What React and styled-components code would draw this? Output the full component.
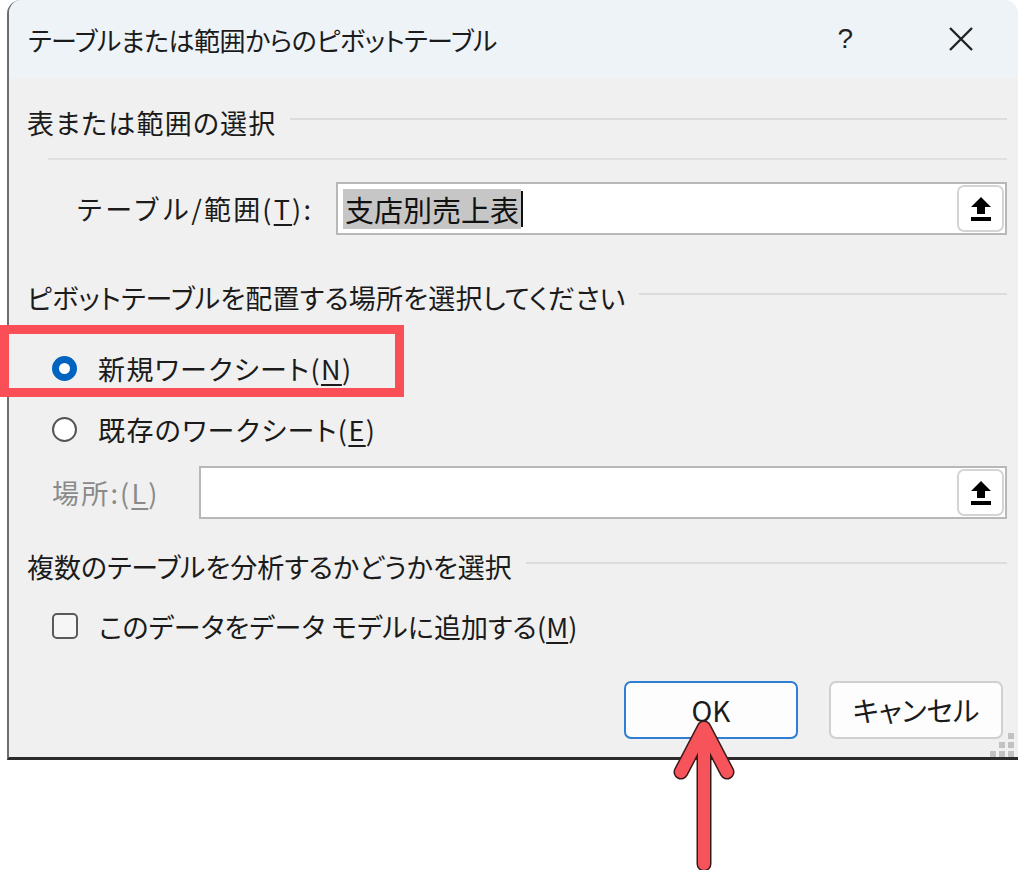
import React from 'react'
import styled, { createGlobalStyle } from 'styled-components'

const GlobalStyle = createGlobalStyle`
  html, body {
    margin: 0;
    padding: 0;
    background: #ffffff;
  }
  body {
    font-family: "Noto Sans CJK JP", "Noto Sans", sans-serif;
    color: #1b1b1b;
    font-feature-settings: "palt";
  }
`

const Page = styled.div`
  position: relative;
  width: 1024px;
  height: 870px;
  overflow: hidden;
`

const Dialog = styled.div`
  margin-left: 7px;
  width: 1011px;
  height: 760px;
  box-sizing: border-box;
  background: #f0f0f0;
  border-left: 2px solid #6d6d6d;
  border-bottom: 3px solid #2b2b2b;
  border-top-left-radius: 14px;
  border-top-right-radius: 14px;
  display: flex;
  flex-direction: column;
  overflow: hidden;
`

const TitleBar = styled.div`
  height: 78px;
  flex-shrink: 0;
  background: #eef3f8;
  display: flex;
  align-items: center;
  padding-left: 19px;
  padding-right: 44px;
`

const Title = styled.div`
  flex: 1;
  font-size: 26px;
  letter-spacing: -0.5px;
`

const TitleButton = styled.div`
  font-size: 28px;
  font-family: "Liberation Sans", sans-serif;
  color: #222;
  margin-left: ${p => p.gap}px;
  display: flex;
  align-items: center;
`

const Body = styled.div`
  padding: 0 11px 0 18px;
  display: flex;
  flex-direction: column;
`

const SectionHeader = styled.div`
  margin-top: ${p => p.top}px;
  height: 36px;
  display: flex;
  align-items: center;
  font-size: 27px;
  letter-spacing: ${p => p.spacing ?? 0.2}px;
  gap: 14px;
  &::after {
    content: '';
    flex: 1;
    height: 2px;
    background: #dcdcdc;
    margin-top: -6px;
  }
`

const Divider = styled.div`
  margin-top: 18px;
  margin-left: 21px;
  height: 2px;
  background: #e0e0e0;
`

const FieldRow = styled.div`
  margin-top: ${p => p.top}px;
  display: flex;
  align-items: center;
  height: 53px;
`

const FieldLabel = styled.div`
  width: ${p => p.width}px;
  padding-left: ${p => p.indent}px;
  box-sizing: border-box;
  flex-shrink: 0;
  font-size: 27px;
  letter-spacing: 2.2px;
  font-feature-settings: normal;
  color: ${p => (p.disabled ? '#8a8a8a' : '#1b1b1b')};
`

const Input = styled.div`
  flex: 1;
  height: 100%;
  box-sizing: border-box;
  background: #ffffff;
  border: 2px solid #b8b8b8;
  display: flex;
  align-items: center;
  padding-left: 5px;
`

const Selected = styled.span`
  background: #c6c6c6;
  font-size: 29px;
  line-height: 40px;
  padding: 0 2px;
  color: #111;
`

const Caret = styled.span`
  width: 2px;
  height: 36px;
  background: #111;
`

const Spacer = styled.div`
  flex: 1;
`

const PickButton = styled.div`
  width: 47px;
  height: 47px;
  margin-right: 1px;
  box-sizing: border-box;
  border: 2px solid #d4d4d4;
  border-radius: 7px;
  background: #ffffff;
  display: flex;
  align-items: center;
  justify-content: center;
`

const OptionRow = styled.div`
  margin-top: ${p => p.top}px;
  height: 40px;
  display: flex;
  align-items: center;
  padding-left: 25px;
  gap: 21px;
  font-size: 27px;
  letter-spacing: ${p => p.spacing}px;
`

const Radio = styled.div`
  width: 25px;
  height: 25px;
  border-radius: 50%;
  box-sizing: border-box;
  border: ${p => (p.checked ? '7px solid #0063c0' : '2px solid #555')};
  background: #ffffff;
`

const Checkbox = styled.div`
  width: 26px;
  height: 26px;
  box-sizing: border-box;
  border: 2px solid #5a5a5a;
  border-radius: 5px;
  background: #f6f6f6;
`

const Key = styled.span`
  text-decoration: underline;
  text-underline-offset: 4px;
  text-decoration-thickness: 2px;
`

const ButtonBar = styled.div`
  margin-top: 35px;
  display: flex;
  justify-content: flex-end;
  gap: 31px;
  padding-right: 4px;
`

const DialogButton = styled.div`
  width: 174px;
  height: 58px;
  box-sizing: border-box;
  background: #fdfdfd;
  border: ${p => (p.primary ? '2px solid #2f7ed6' : '2px solid #d0d0d0')};
  border-radius: 7px;
  display: flex;
  align-items: center;
  justify-content: center;
  font-size: 28px;
  color: #1b1b1b;
`

const Grip = styled.svg`
  position: absolute;
  right: 8px;
  top: 733px;
`

const Highlight = styled.div`
  position: absolute;
  left: 0;
  top: 325px;
  width: 404px;
  height: 72px;
  box-sizing: border-box;
  border: 9px solid #fa4f57;
  pointer-events: none;
`

const Arrow = styled.svg`
  position: absolute;
  left: 664px;
  top: 716px;
`

function UploadIcon() {
  return (
    <svg width="22" height="26" viewBox="0 0 22 26">
      <path d="M11 1 L21 11 L15 11 L15 18 L7 18 L7 11 L1 11 Z" fill="#000" />
      <rect x="1" y="21" width="20" height="4" fill="#000" />
    </svg>
  )
}

function CloseIcon() {
  return (
    <svg width="26" height="26" viewBox="0 0 26 26">
      <path d="M2 2 L24 24 M24 2 L2 24" stroke="#222" strokeWidth="2.4" />
    </svg>
  )
}

export default function App() {
  return (
    <Page>
      <GlobalStyle />
      <Dialog>
        <TitleBar>
          <Title>テーブルまたは範囲からのピボットテーブル</Title>
          <TitleButton gap={0}>?</TitleButton>
          <TitleButton gap={95}><CloseIcon /></TitleButton>
        </TitleBar>
        <Body>
          <SectionHeader top={26} spacing={1.2}>表または範囲の選択</SectionHeader>
          <Divider />
          <FieldRow top={22}>
            <FieldLabel width={309} indent={49}>
              テーブル/範囲(<Key>T</Key>):
            </FieldLabel>
            <Input>
              <Selected>支店別売上表</Selected>
              <Caret />
              <Spacer />
              <PickButton><UploadIcon /></PickButton>
            </Input>
          </FieldRow>
          <SectionHeader top={44}>ピボットテーブルを配置する場所を選択してください</SectionHeader>
          <OptionRow top={33} spacing={1.4}>
            <Radio checked />
            <span>新規ワークシート(<Key>N</Key>)</span>
          </OptionRow>
          <OptionRow top={21} spacing={1.4}>
            <Radio />
            <span>既存のワークシート(<Key>E</Key>)</span>
          </OptionRow>
          <FieldRow top={17}>
            <FieldLabel width={172} indent={25} disabled>
              場所:(<Key>L</Key>)
            </FieldLabel>
            <Input>
              <Spacer />
              <PickButton><UploadIcon /></PickButton>
            </Input>
          </FieldRow>
          <SectionHeader top={29} spacing={0}>複数のテーブルを分析するかどうかを選択</SectionHeader>
          <OptionRow top={22} spacing={0.1}>
            <Checkbox />
            <span>このデータをデータ モデルに追加する(<Key>M</Key>)</span>
          </OptionRow>
          <ButtonBar>
            <DialogButton primary>OK</DialogButton>
            <DialogButton>キャンセル</DialogButton>
          </ButtonBar>
        </Body>
      </Dialog>
      <Grip width="26" height="26" viewBox="0 0 26 26">
        <rect x="18" y="0" width="6" height="6" fill="#c2c2c2" />
        <rect x="9" y="9" width="6" height="6" fill="#c2c2c2" />
        <rect x="18" y="9" width="6" height="6" fill="#c2c2c2" />
        <rect x="0" y="18" width="6" height="6" fill="#c2c2c2" />
        <rect x="9" y="18" width="6" height="6" fill="#c2c2c2" />
        <rect x="18" y="18" width="6" height="6" fill="#c2c2c2" />
      </Grip>
      <Highlight />
      <Arrow width="80" height="154" viewBox="0 0 80 154">
        <path
          d="M40 14 L40 148 M40 12 L17 56 M40 12 L63 56"
          stroke="#3a1a1a"
          strokeWidth="15"
          strokeLinecap="round"
          strokeLinejoin="round"
          fill="none"
        />
        <path
          d="M40 14 L40 148 M40 12 L17 56 M40 12 L63 56"
          stroke="#f7535b"
          strokeWidth="12"
          strokeLinecap="round"
          strokeLinejoin="round"
          fill="none"
        />
      </Arrow>
    </Page>
  )
}
